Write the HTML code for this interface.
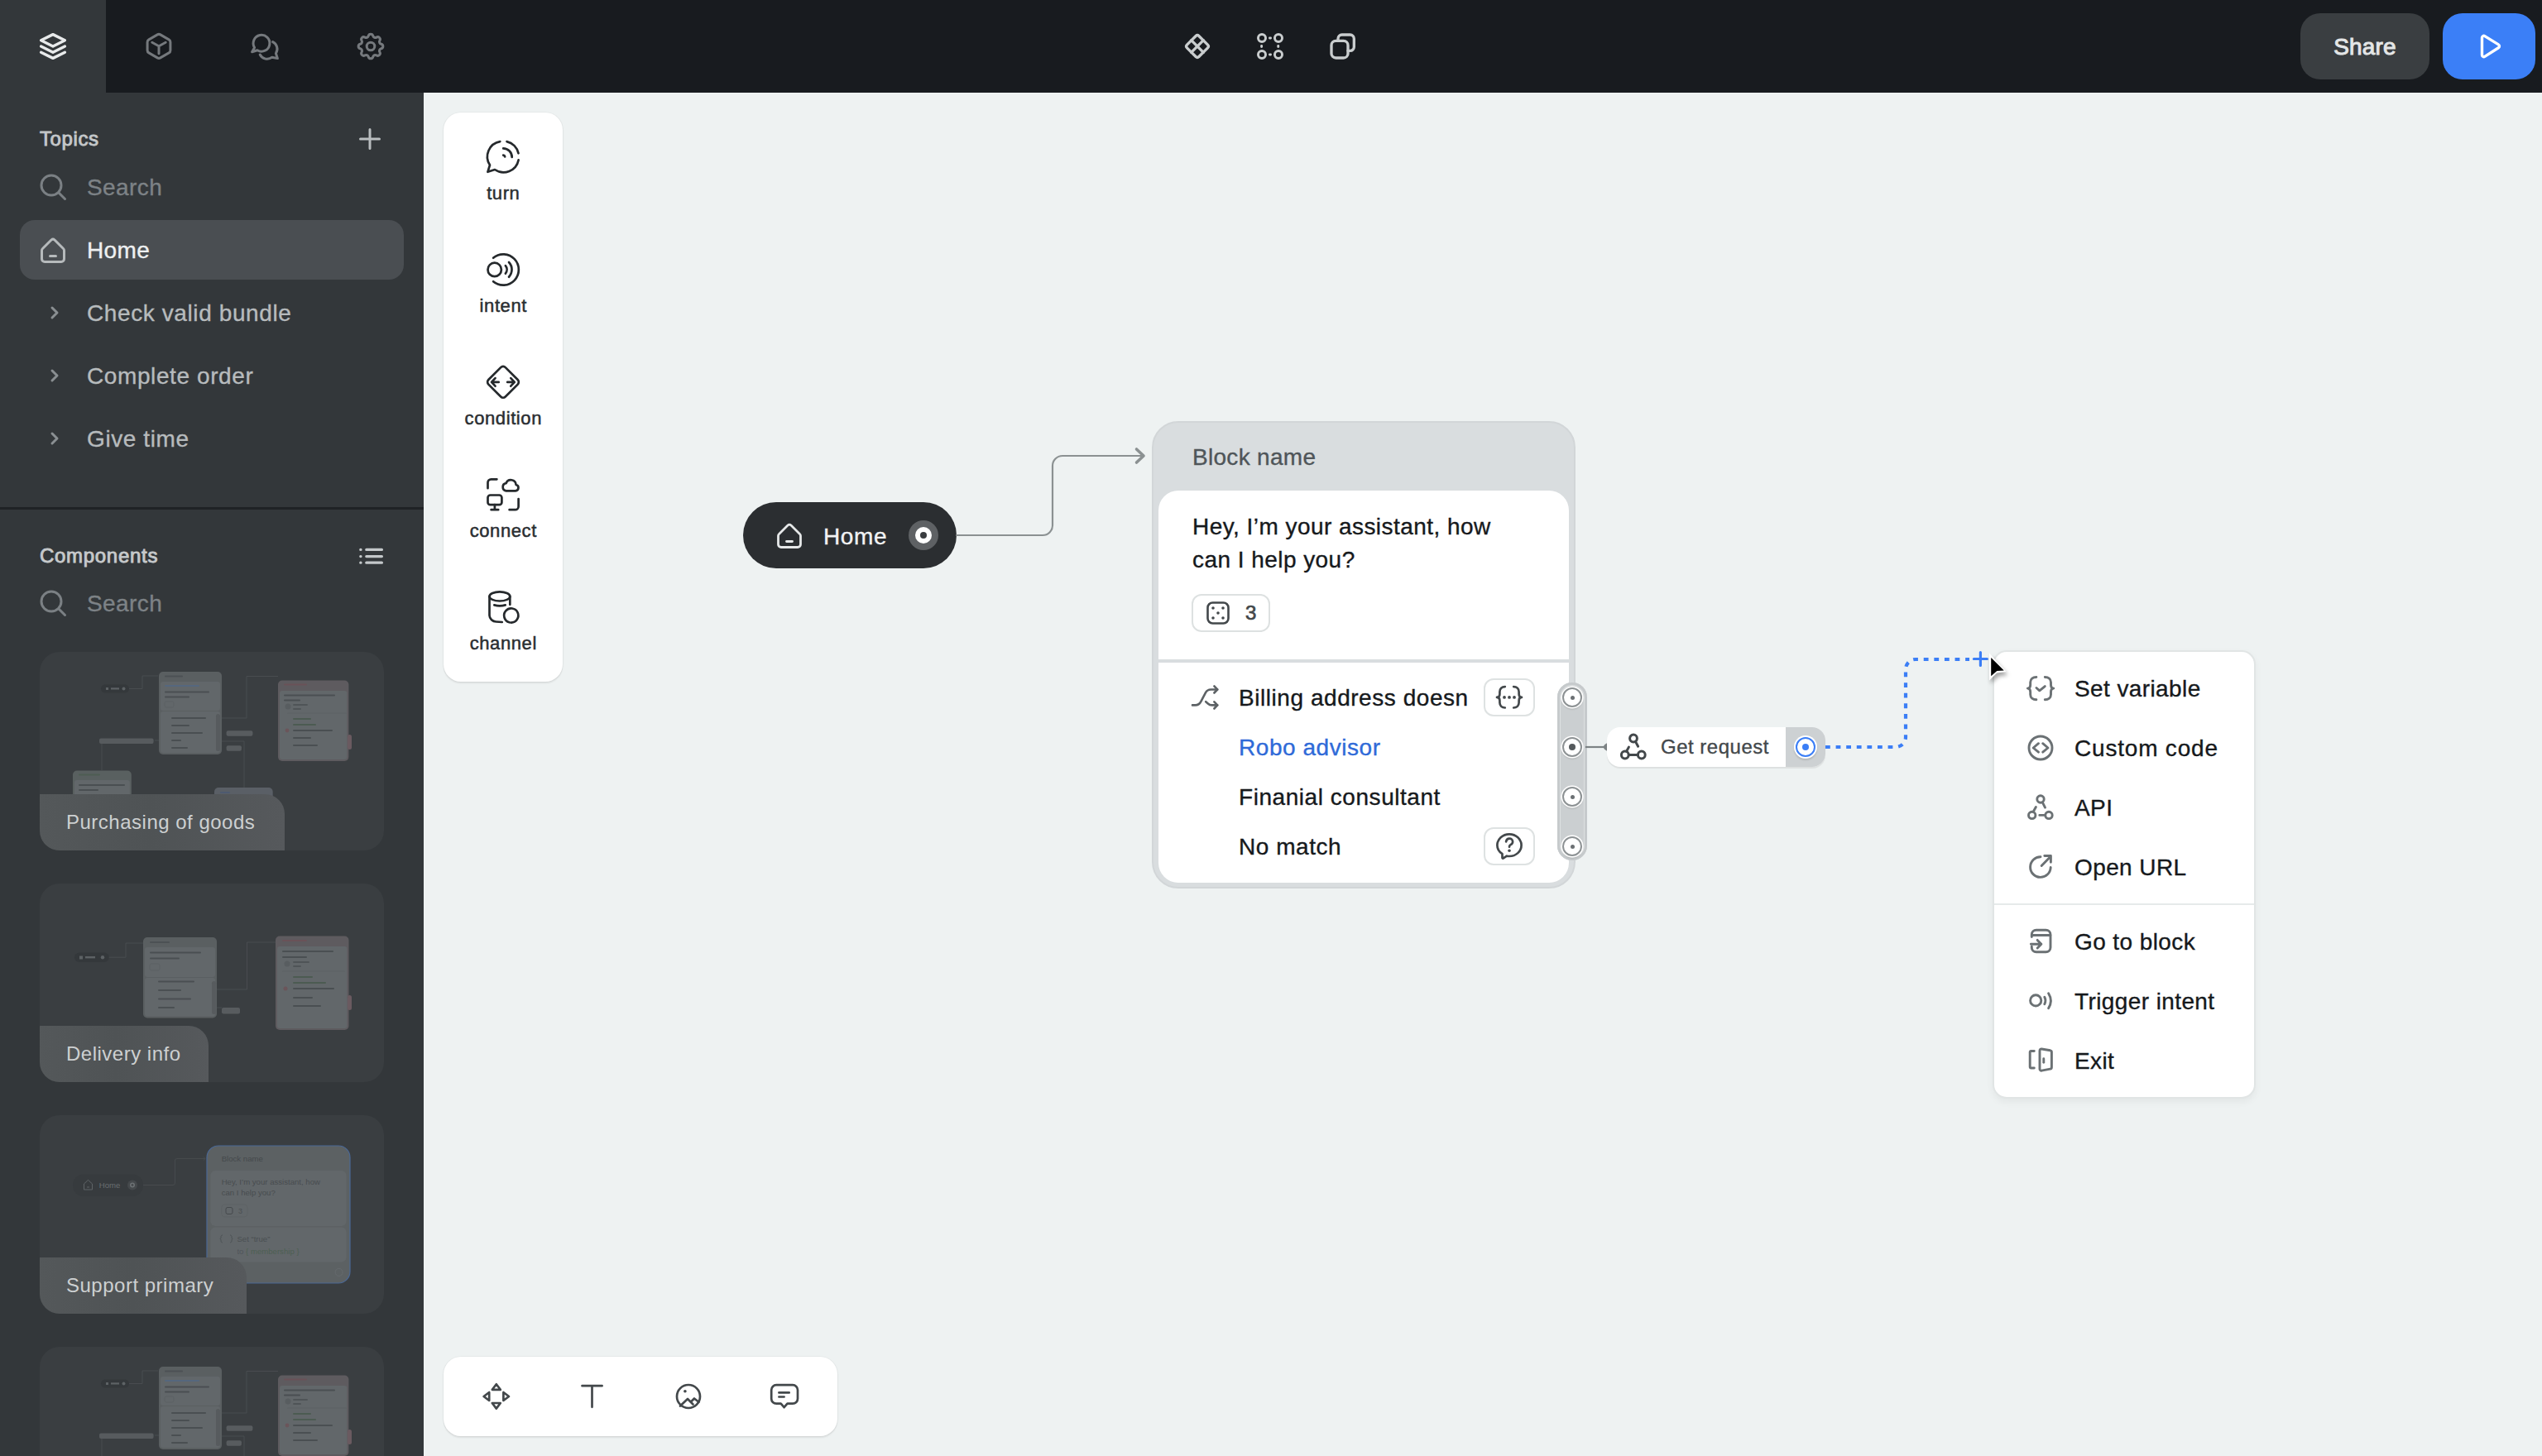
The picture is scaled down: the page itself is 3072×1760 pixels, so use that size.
<!DOCTYPE html>
<html><head><meta charset="utf-8">
<style>
*{margin:0;padding:0;box-sizing:border-box}
html,body{width:3072px;height:1760px;overflow:hidden;background:#eef2f2;font-family:"Liberation Sans",sans-serif}
.a{position:absolute}
svg{display:block;overflow:visible}
.ic{fill:none;stroke-linecap:round;stroke-linejoin:round}
#top{left:0;top:0;width:3072px;height:112px;background:#181b1f}
#side{left:0;top:112px;width:512px;height:1648px;background:#33373a}
.t{white-space:nowrap;line-height:1;-webkit-text-stroke:0.35px currentColor;margin-top:1px}
</style></head>
<body>
<!-- top bar -->
<div id="top" class="a"></div>
<div class="a" style="left:0;top:0;width:128px;height:112px;background:#33373a"></div>
<svg class="a ic" style="left:46px;top:38px" width="36" height="36" viewBox="2 2 20 20" stroke="#e8eaeb" stroke-width="1.9"><path d="M12 4l-8 4l8 4l8-4z"/><path d="M4 12l8 4l8-4"/><path d="M4 16l8 4l8-4"/></svg>
<svg class="a ic" style="left:160px;top:30px" width="320" height="52" viewBox="160 30 320 52" stroke="#75797d" stroke-width="3">
<path d="M190.2 41.9a3.5 3.5 0 0 1 3.6 0l10.3 6a3.5 3.5 0 0 1 1.8 3v10a3.5 3.5 0 0 1-1.8 3l-10.3 6a3.5 3.5 0 0 1-3.6 0l-10.3-6a3.5 3.5 0 0 1-1.8-3v-10a3.5 3.5 0 0 1 1.8-3z"/>
<path d="M183.8 51.3l8.2 4.5l8.2-4.5M192 55.8v9"/>
<path d="M307.6 57.5A9.9 9.9 0 1 1 311 60.8L304.6 62.8z"/>
<path d="M329.6 50.6A9.6 9.6 0 0 1 333.4 64.5L335.4 70.6L328.8 69.2A9.6 9.6 0 0 1 314.2 66"/>
</svg>
<svg class="a ic" style="left:432px;top:40px" width="32" height="32" viewBox="2.3 2.3 19.4 19.4" stroke="#75797d" stroke-width="1.85"><path d="M10.325 4.317c.426 -1.756 2.924 -1.756 3.35 0a1.724 1.724 0 0 0 2.573 1.066c1.543 -.94 3.31 .826 2.37 2.37a1.724 1.724 0 0 0 1.065 2.572c1.756 .426 1.756 2.924 0 3.35a1.724 1.724 0 0 0 -1.066 2.573c.94 1.543 -.826 3.31 -2.37 2.37a1.724 1.724 0 0 0 -2.572 1.065c-.426 1.756 -2.924 1.756 -3.35 0a1.724 1.724 0 0 0 -2.573 -1.066c-1.543 .94 -3.31 -.826 -2.37 -2.37a1.724 1.724 0 0 0 -1.065 -2.572c-1.756 -.426 -1.756 -2.924 0 -3.35a1.724 1.724 0 0 0 1.066 -2.573c-.94 -1.543 .826 -3.31 2.37 -2.37c1 .608 2.296 .07 2.572 -1.065z"/><circle cx="12" cy="12" r="2.9"/></svg>

<svg class="a ic" style="left:1431px;top:40px" width="32" height="32" viewBox="0 0 24 24" stroke="#c9cdce" stroke-width="2.5"><path d="M10.6 2.6a2 2 0 0 1 2.8 0l8 8a2 2 0 0 1 0 2.8l-8 8a2 2 0 0 1-2.8 0l-8-8a2 2 0 0 1 0-2.8z"/><path d="M6.5 6.5l11 11"/><path d="M17.5 6.5l-11 11"/></svg>
<svg class="a ic" style="left:1519px;top:40px" width="32" height="32" viewBox="0 0 24 24" stroke="#c9cdce" stroke-width="2.2"><circle cx="4.5" cy="4.5" r="3.4"/><circle cx="19.5" cy="4.5" r="3.4"/><circle cx="4.5" cy="19.5" r="3.4"/><circle cx="19.5" cy="19.5" r="3.4"/><path d="M11.6 4.5h0.8M11.6 19.5h0.8M4.2 11.6v0.8M19.3 11.6v0.8"/></svg>
<svg class="a ic" style="left:1607px;top:40px" width="32" height="32" viewBox="0 0 24 24" stroke="#c9cdce" stroke-width="2.5"><rect x="1.5" y="7" width="15" height="15.5" rx="4"/><path d="M7.5 7V5a3.5 3.5 0 0 1 3.5-3.5h7.5a3.5 3.5 0 0 1 3.5 3.5v7.5a3.5 3.5 0 0 1-3.5 3.5h-2"/></svg>

<div class="a" style="left:2780px;top:16px;width:156px;height:80px;background:#3a3e41;border-radius:24px"></div>
<div class="a t" style="left:2780px;top:16px;width:156px;height:80px;line-height:80px;text-align:center;font-size:28px;color:#e4e6e7;letter-spacing:0.2px;-webkit-text-stroke:1px #e4e6e7">Share</div>
<div class="a" style="left:2952px;top:16px;width:112px;height:80px;background:#3b7ff7;border-radius:24px"></div>
<svg class="a ic" style="left:2990px;top:38px" width="36" height="36" viewBox="0 0 36 36" stroke="#ffffff" stroke-width="3.4"><path d="M9.5 7.5a2.2 2.2 0 0 1 3.3-1.9l16.6 10.3a2.2 2.2 0 0 1 0 3.8L12.8 30.4a2.2 2.2 0 0 1-3.3-1.9z"/></svg>

<!-- sidebar -->
<div id="side" class="a"></div>
<div class="a t" style="left:48px;top:155px;font-size:24px;color:#c4c7c9;letter-spacing:0.6px;-webkit-text-stroke:0.9px #c4c7c9">Topics</div>
<svg class="a ic" style="left:434px;top:155px" width="26" height="26" viewBox="0 0 26 26" stroke="#b9bdbf" stroke-width="3"><path d="M13 1.5v23M1.5 13h23"/></svg>
<svg class="a ic" style="left:48px;top:210px" width="32" height="32" viewBox="0 0 32 32" stroke="#7b8084" stroke-width="3"><circle cx="14" cy="14" r="12"/><path d="M23 23l7.5 7.5"/></svg>
<div class="a t" style="left:105px;top:212px;font-size:28px;color:#7d8286;letter-spacing:0.4px">Search</div>

<div class="a" style="left:24px;top:266px;width:464px;height:72px;background:#4a4e52;border-radius:18px"></div>
<svg class="a ic" style="left:48px;top:286px" width="32" height="32" viewBox="0 0 32 32" stroke="#b6babc" stroke-width="3"><path d="M3.5 14.5L14 4a3 3 0 0 1 4 0L28.5 14.5a3 3 0 0 1 1 2.2V27a3.5 3.5 0 0 1-3.5 3.5H6A3.5 3.5 0 0 1 2.5 27V16.7a3 3 0 0 1 1-2.2z"/><path d="M12.5 23.5h7"/></svg>
<div class="a t" style="left:105px;top:288px;font-size:28px;color:#eef0f1;letter-spacing:0.4px">Home</div>

<svg class="a ic" style="left:58px;top:370px" width="16" height="16" viewBox="0 0 16 16" stroke="#8a8f92" stroke-width="3"><path d="M5 2l6 6l-6 6"/></svg>
<div class="a t" style="left:105px;top:364px;font-size:28px;color:#b7bbbd;letter-spacing:0.6px">Check valid bundle</div>
<svg class="a ic" style="left:58px;top:446px" width="16" height="16" viewBox="0 0 16 16" stroke="#8a8f92" stroke-width="3"><path d="M5 2l6 6l-6 6"/></svg>
<div class="a t" style="left:105px;top:440px;font-size:28px;color:#b7bbbd;letter-spacing:0.6px">Complete order</div>
<svg class="a ic" style="left:58px;top:522px" width="16" height="16" viewBox="0 0 16 16" stroke="#8a8f92" stroke-width="3"><path d="M5 2l6 6l-6 6"/></svg>
<div class="a t" style="left:105px;top:516px;font-size:28px;color:#b7bbbd;letter-spacing:0.6px">Give time</div>

<div class="a" style="left:0;top:613px;width:512px;height:3px;background:#1f2225"></div>

<div class="a t" style="left:48px;top:659px;font-size:24px;color:#c6c9cb;letter-spacing:0.7px;-webkit-text-stroke:0.9px #c6c9cb">Components</div>
<svg class="a ic" style="left:432px;top:660px" width="32" height="24" viewBox="0 0 32 24" stroke="#c4c8ca" stroke-width="3.3"><path d="M3.8 4.4h0.2M3.8 12.6h0.2M3.8 20.2h0.2M10.8 4.4h18.6M10.8 12.6h18.6M10.8 20.2h18.6"/></svg>
<svg class="a ic" style="left:48px;top:713px" width="32" height="32" viewBox="0 0 32 32" stroke="#7b8084" stroke-width="3"><circle cx="14" cy="14" r="12"/><path d="M23 23l7.5 7.5"/></svg>
<div class="a t" style="left:105px;top:715px;font-size:28px;color:#7d8286;letter-spacing:0.4px">Search</div>

<!-- component cards -->
<div class="a" style="left:48px;top:788px;width:416px;height:240px;background:#3a3e41;border-radius:24px;overflow:hidden"><svg class="a" style="left:0;top:0" width="416" height="240" viewBox="0 0 416 240"><rect x="74" y="39.5" width="34" height="10" rx="5" fill="#34383b"/><rect x="80" y="43" width="3" height="3" fill="#5d6265"/><rect x="86" y="43.3" width="10" height="2.2" fill="#5d6265"/><circle cx="101.5" cy="44.5" r="2" fill="#5d6265"/><path d="M108 44.5H124V29H143" stroke="#4d5154" stroke-width="0.8" fill="none"/><rect x="144" y="24" width="76" height="100" rx="5" fill="#5a5f61"/><rect x="146" y="36" width="72" height="35" rx="3" fill="#62676a"/><rect x="146" y="72" width="72" height="50" rx="3" fill="#62676a"/><rect x="151" y="28.4" width="22" height="2.2" rx="1" fill="#4c5154"/><rect x="151" y="39.9" width="42" height="2.2" rx="1" fill="#55677e"/><rect x="151" y="47.4" width="54" height="2.2" rx="1" fill="#4a4f52"/><rect x="151" y="53.4" width="30" height="2.2" rx="1" fill="#4a4f52"/><rect x="151" y="60" width="11" height="7" rx="2" fill="none" stroke="#575c5f" stroke-width="0.6"/><rect x="159" y="78.9" width="42" height="2.2" rx="1" fill="#4a4f52"/><rect x="159" y="87.9" width="22" height="2.2" rx="1" fill="#4a4f52"/><rect x="159" y="96.9" width="38" height="2.2" rx="1" fill="#4a4f52"/><rect x="159" y="105.9" width="12" height="2.2" rx="1" fill="#4a4f52"/><rect x="159" y="114.9" width="20" height="2.2" rx="1" fill="#4a4f52"/><rect x="213" y="75" width="5" height="45" rx="2.5" fill="#575b5e"/><rect x="288" y="34.6" width="85.4" height="97.4" rx="5" fill="#5e5b5f"/><rect x="290" y="47" width="81.4" height="83" rx="3" fill="#62676a"/><rect x="295" y="38.4" width="28" height="2.2" rx="1" fill="#6a5258"/><rect x="295" y="51.4" width="62" height="2.2" rx="1" fill="#4a4f52"/><rect x="295" y="57.4" width="20" height="2.2" rx="1" fill="#4a4f52"/><circle cx="300" cy="66" r="3.5" fill="#585d60"/><rect x="306" y="63.2" width="18" height="1.6" rx="1" fill="#4a4f52"/><rect x="306" y="68.2" width="10" height="1.6" rx="1" fill="#4a4f52"/><rect x="299" y="73.7" width="72" height="0.6" rx="1" fill="#595e61"/><rect x="306" y="79.9" width="22" height="2.2" rx="1" fill="#4c5b52"/><rect x="306" y="86.9" width="28" height="2.2" rx="1" fill="#4c5b52"/><circle cx="299" cy="95" r="2.4" fill="#6b555a"/><rect x="306" y="93.9" width="48" height="2.2" rx="1" fill="#4a4f52"/><rect x="306" y="102.9" width="22" height="2.2" rx="1" fill="#4a4f52"/><rect x="306" y="111.9" width="30" height="2.2" rx="1" fill="#4a4f52"/><rect x="372" y="100" width="5" height="18" rx="2.5" fill="#6a5a60"/><path d="M220 108H247V164M220 80H250V29.5H288M139 107H144M75 111V143" stroke="#4d5154" stroke-width="0.8" fill="none"/><rect x="72" y="104.6" width="65.6" height="6.4" rx="2" fill="#575b5e"/><rect x="225.6" y="95.3" width="31.8" height="6.5" rx="2" fill="#585c5f"/><rect x="225.6" y="113.3" width="18.3" height="6.5" rx="2" fill="#585c5f"/><rect x="40" y="143.6" width="70.8" height="60" rx="5" fill="#596060"/><rect x="42" y="155" width="66.8" height="40" rx="3" fill="#62676a"/><rect x="47" y="147.4" width="26" height="2.2" rx="1" fill="#4e5d52"/><rect x="47" y="159.9" width="56" height="2.2" rx="1" fill="#4a4f52"/><rect x="47" y="165.9" width="24" height="2.2" rx="1" fill="#4a4f52"/><rect x="211" y="164" width="70.7" height="40" rx="5" fill="#5a5f66"/><rect x="218" y="168.9" width="12" height="2.2" rx="1" fill="#4d5a70"/></svg></div>
<div class="a" style="left:48px;top:960px;width:296px;height:68px;background:linear-gradient(90deg,#54585a,#4f5355 45%,#56595c);border-radius:0 24px 0 24px"></div>
<div class="a t" style="left:80px;top:981px;font-size:24px;color:#cdd0d1;letter-spacing:0.5px;-webkit-text-stroke:0">Purchasing of goods</div>
<div class="a" style="left:48px;top:1068px;width:416px;height:240px;background:#3a3e41;border-radius:24px;overflow:hidden"><svg class="a" style="left:0;top:0" width="416" height="240" viewBox="0 0 416 240"><rect x="42" y="83.5" width="41.7" height="11.5" rx="5.7" fill="#34383b"/><rect x="48" y="87.5" width="4" height="4" fill="#5d6265"/><rect x="55" y="88" width="12" height="2.4" fill="#5d6265"/><circle cx="76" cy="89.2" r="2.2" fill="#5d6265"/><path d="M83.7 89.2H104V72H125M214 128H250.5V71H285M214 150H220" stroke="#4d5154" stroke-width="0.8" fill="none"/><rect x="125" y="65" width="89" height="97.5" rx="5" fill="#5a5f61"/><rect x="127" y="77" width="85" height="36" rx="3" fill="#62676a"/><rect x="127" y="114" width="85" height="46.5" rx="3" fill="#62676a"/><rect x="133" y="69.9" width="24" height="2.2" rx="1" fill="#4c5154"/><rect x="133" y="82.4" width="62" height="2.2" rx="1" fill="#4a4f52"/><rect x="133" y="89.4" width="36" height="2.2" rx="1" fill="#4a4f52"/><rect x="133" y="97" width="12" height="8" rx="2" fill="none" stroke="#575c5f" stroke-width="0.6"/><rect x="143" y="117.4" width="44" height="2.2" rx="1" fill="#4a4f52"/><rect x="143" y="127.9" width="28" height="2.2" rx="1" fill="#4a4f52"/><rect x="143" y="138.4" width="40" height="2.2" rx="1" fill="#4a4f52"/><rect x="143" y="148.9" width="20" height="2.2" rx="1" fill="#4a4f52"/><rect x="208" y="118" width="5" height="40" rx="2.5" fill="#575b5e"/><rect x="285" y="63.5" width="88.5" height="113.5" rx="5" fill="#5e5b5f"/><rect x="287" y="76" width="84.5" height="99" rx="3" fill="#62676a"/><rect x="293" y="67.9" width="30" height="2.2" rx="1" fill="#6a5258"/><rect x="293" y="80.9" width="62" height="2.2" rx="1" fill="#4a4f52"/><rect x="293" y="87.9" width="30" height="2.2" rx="1" fill="#4a4f52"/><circle cx="299" cy="97" r="3.5" fill="#585d60"/><rect x="306" y="94.2" width="20" height="1.6" rx="1" fill="#4a4f52"/><rect x="306" y="99.2" width="10" height="1.6" rx="1" fill="#4a4f52"/><rect x="293" y="105.7" width="76" height="0.6" rx="1" fill="#595e61"/><rect x="306" y="111.9" width="24" height="2.2" rx="1" fill="#4c5b52"/><rect x="306" y="118.9" width="40" height="2.2" rx="1" fill="#4c5b52"/><circle cx="297" cy="127" r="2.5" fill="#6b555a"/><rect x="306" y="125.9" width="50" height="2.2" rx="1" fill="#4a4f52"/><rect x="306" y="136.9" width="24" height="2.2" rx="1" fill="#4a4f52"/><rect x="306" y="146.9" width="34" height="2.2" rx="1" fill="#4a4f52"/><rect x="372" y="135" width="5" height="18" rx="2.5" fill="#6a5a60"/><rect x="220" y="150" width="22" height="7.6" rx="2" fill="#585c5f"/></svg></div>
<div class="a" style="left:48px;top:1240px;width:204px;height:68px;background:linear-gradient(90deg,#54585a,#4f5355 45%,#56595c);border-radius:0 24px 0 24px"></div>
<div class="a t" style="left:80px;top:1261px;font-size:24px;color:#cdd0d1;letter-spacing:0.5px;-webkit-text-stroke:0">Delivery info</div>
<div class="a" style="left:48px;top:1348px;width:416px;height:240px;background:#3a3e41;border-radius:24px;overflow:hidden"><svg class="a" style="left:0;top:0" width="416" height="240" viewBox="0 0 416 240"><rect x="40" y="71.5" width="85" height="26.5" rx="13.2" fill="#373b3e"/><path d="M53.5 83l5-4.6l5 4.6v7h-10z M57 87h3" stroke="#5f6467" stroke-width="1" fill="none"/><text x="71.8" y="88" font-size="9.6" fill="#696e71" font-family="Liberation Sans">Home</text><circle cx="112" cy="84.5" r="6" fill="#45494c"/><circle cx="112" cy="84.5" r="3" fill="#6c7174"/><circle cx="112" cy="84.5" r="1.4" fill="#45494c"/><path d="M125 84.5H161a2.4 2.4 0 0 0 2.4-2.4V55a2.4 2.4 0 0 1 2.4-2.4H200" stroke="#4b4f52" stroke-width="0.8" fill="none"/><path d="M198 50.6l2 2l-2 2" stroke="#4b4f52" stroke-width="0.8" fill="none"/><rect x="202" y="37" width="173" height="166" rx="14" fill="#5c6163" stroke="#4a6896" stroke-width="1.2"/><text x="219.7" y="56" font-size="9.6" fill="#45494c" font-family="Liberation Sans">Block name</text><rect x="206.3" y="67" width="164.3" height="67" rx="6" fill="#62676a"/><rect x="206.3" y="135.5" width="164.3" height="42" rx="6" fill="#62676a"/><text x="219.7" y="84" font-size="9.6" fill="#484c4f" font-family="Liberation Sans">Hey, I’m your assistant, how</text><text x="219.7" y="97" font-size="9.6" fill="#484c4f" font-family="Liberation Sans">can I help you?</text><rect x="219.7" y="108" width="31.3" height="15" rx="4" fill="none" stroke="#5a5f62" stroke-width="0.6"/><rect x="225" y="111.5" width="8" height="8" rx="2" fill="none" stroke="#45494c" stroke-width="1"/><text x="240" y="119" font-size="9" fill="#4a4f52" font-family="Liberation Sans">3</text><path d="M221 145c-1.5 0-2 1-2 2v1c0 1-0.5 1.5-1.2 1.5c0.7 0 1.2 0.5 1.2 1.5v1c0 1 0.5 2 2 2M230 145c1.5 0 2 1 2 2v1c0 1 0.5 1.5 1.2 1.5c-0.7 0-1.2 0.5-1.2 1.5v1c0 1-0.5 2-2 2" stroke="#4b5053" stroke-width="0.9" fill="none"/><text x="238.4" y="152.5" font-size="9.6" fill="#4a4f52" font-family="Liberation Sans">Set “true”</text><text x="238.4" y="167.5" font-size="9.6" fill="#50555a" font-family="Liberation Sans">to <tspan fill="#4d5f52">{ membership }</tspan></text><circle cx="361.6" cy="189.9" r="4.5" fill="none" stroke="#666b6e" stroke-width="1"/></svg></div>
<div class="a" style="left:48px;top:1520px;width:250px;height:68px;background:linear-gradient(90deg,#54585a,#4f5355 45%,#56595c);border-radius:0 24px 0 24px"></div>
<div class="a t" style="left:80px;top:1541px;font-size:24px;color:#cdd0d1;letter-spacing:0.5px;-webkit-text-stroke:0">Support primary</div>
<div class="a" style="left:48px;top:1628px;width:416px;height:240px;background:#3a3e41;border-radius:24px;overflow:hidden"><svg class="a" style="left:0;top:0" width="416" height="240" viewBox="0 0 416 240"><rect x="74" y="39.5" width="34" height="10" rx="5" fill="#34383b"/><rect x="80" y="43" width="3" height="3" fill="#5d6265"/><rect x="86" y="43.3" width="10" height="2.2" fill="#5d6265"/><circle cx="101.5" cy="44.5" r="2" fill="#5d6265"/><path d="M108 44.5H124V29H143" stroke="#4d5154" stroke-width="0.8" fill="none"/><rect x="144" y="24" width="76" height="100" rx="5" fill="#5a5f61"/><rect x="146" y="36" width="72" height="35" rx="3" fill="#62676a"/><rect x="146" y="72" width="72" height="50" rx="3" fill="#62676a"/><rect x="151" y="28.4" width="22" height="2.2" rx="1" fill="#4c5154"/><rect x="151" y="39.9" width="42" height="2.2" rx="1" fill="#55677e"/><rect x="151" y="47.4" width="54" height="2.2" rx="1" fill="#4a4f52"/><rect x="151" y="53.4" width="30" height="2.2" rx="1" fill="#4a4f52"/><rect x="151" y="60" width="11" height="7" rx="2" fill="none" stroke="#575c5f" stroke-width="0.6"/><rect x="159" y="78.9" width="42" height="2.2" rx="1" fill="#4a4f52"/><rect x="159" y="87.9" width="22" height="2.2" rx="1" fill="#4a4f52"/><rect x="159" y="96.9" width="38" height="2.2" rx="1" fill="#4a4f52"/><rect x="159" y="105.9" width="12" height="2.2" rx="1" fill="#4a4f52"/><rect x="159" y="114.9" width="20" height="2.2" rx="1" fill="#4a4f52"/><rect x="213" y="75" width="5" height="45" rx="2.5" fill="#575b5e"/><rect x="288" y="34.6" width="85.4" height="97.4" rx="5" fill="#5e5b5f"/><rect x="290" y="47" width="81.4" height="83" rx="3" fill="#62676a"/><rect x="295" y="38.4" width="28" height="2.2" rx="1" fill="#6a5258"/><rect x="295" y="51.4" width="62" height="2.2" rx="1" fill="#4a4f52"/><rect x="295" y="57.4" width="20" height="2.2" rx="1" fill="#4a4f52"/><circle cx="300" cy="66" r="3.5" fill="#585d60"/><rect x="306" y="63.2" width="18" height="1.6" rx="1" fill="#4a4f52"/><rect x="306" y="68.2" width="10" height="1.6" rx="1" fill="#4a4f52"/><rect x="299" y="73.7" width="72" height="0.6" rx="1" fill="#595e61"/><rect x="306" y="79.9" width="22" height="2.2" rx="1" fill="#4c5b52"/><rect x="306" y="86.9" width="28" height="2.2" rx="1" fill="#4c5b52"/><circle cx="299" cy="95" r="2.4" fill="#6b555a"/><rect x="306" y="93.9" width="48" height="2.2" rx="1" fill="#4a4f52"/><rect x="306" y="102.9" width="22" height="2.2" rx="1" fill="#4a4f52"/><rect x="306" y="111.9" width="30" height="2.2" rx="1" fill="#4a4f52"/><rect x="372" y="100" width="5" height="18" rx="2.5" fill="#6a5a60"/><path d="M220 108H247V164M220 80H250V29.5H288M139 107H144M75 111V143" stroke="#4d5154" stroke-width="0.8" fill="none"/><rect x="72" y="104.6" width="65.6" height="6.4" rx="2" fill="#575b5e"/><rect x="225.6" y="95.3" width="31.8" height="6.5" rx="2" fill="#585c5f"/><rect x="225.6" y="113.3" width="18.3" height="6.5" rx="2" fill="#585c5f"/><rect x="40" y="143.6" width="70.8" height="60" rx="5" fill="#596060"/><rect x="42" y="155" width="66.8" height="40" rx="3" fill="#62676a"/><rect x="47" y="147.4" width="26" height="2.2" rx="1" fill="#4e5d52"/><rect x="47" y="159.9" width="56" height="2.2" rx="1" fill="#4a4f52"/><rect x="47" y="165.9" width="24" height="2.2" rx="1" fill="#4a4f52"/><rect x="211" y="164" width="70.7" height="40" rx="5" fill="#5a5f66"/><rect x="218" y="168.9" width="12" height="2.2" rx="1" fill="#4d5a70"/></svg></div>
<!-- end cards -->

<!-- canvas -->
<div class="a" style="left:512px;top:112px;width:2560px;height:1648px;background:#eef2f2"></div>

<!-- tool panel -->
<div class="a" style="left:536px;top:136px;width:144px;height:688px;background:#ffffff;border-radius:21px;box-shadow:0 0 0 1px rgba(0,0,0,0.03),0 1.5px 2px rgba(0,0,0,0.08)"></div>
<svg class="a ic" style="left:580px;top:160px" width="60" height="60" viewBox="0 0 60 60" stroke="#25292c" stroke-width="2.7"><path d="M24.3 11.1A18.5 18.5 0 0 0 12 39.5L9.4 47.8L18 45A18.5 18.5 0 0 0 46.6 33.4"/><path d="M32.5 11.1A18.5 18.5 0 0 1 46.5 25.3"/><path d="M28.2 19.4A10.5 10.5 0 0 1 38.7 30"/><path d="M28.2 27.6A2.2 2.2 0 0 1 30.2 29.4"/></svg>
<div class="a t" style="left:536px;top:222px;width:144px;text-align:center;font-size:22px;letter-spacing:0.6px;text-indent:0.6px;color:#2a2e31;-webkit-text-stroke:0.5px #2a2e31">turn</div>
<svg class="a ic" style="left:580px;top:296px" width="60" height="60" viewBox="0 0 60 60" stroke="#25292c" stroke-width="2.7"><path d="M16.1 15.7A18.7 18.7 0 1 1 16.1 44.3"/><circle cx="17.7" cy="29.9" r="8.2"/><path d="M30.9 25.1A7.5 7.5 0 0 1 30.9 34.6"/><path d="M35 21A12.9 12.9 0 0 1 35 38.7"/></svg>
<div class="a t" style="left:536px;top:358px;width:144px;text-align:center;font-size:22px;letter-spacing:0.6px;text-indent:0.6px;color:#2a2e31;-webkit-text-stroke:0.5px #2a2e31">intent</div>
<svg class="a ic" style="left:580px;top:432px" width="60" height="60" viewBox="0 0 60 60" stroke="#25292c" stroke-width="2.7"><path d="M25.2 12.1a4 4 0 0 1 5.6 0l14.9 14.9a4 4 0 0 1 0 5.6L30.8 47.5a4 4 0 0 1-5.6 0L10.3 32.6a4 4 0 0 1 0-5.6z"/><path d="M18.5 25.1L14 29.9L18.5 34.7M14.5 29.9h8.2M37.3 25.1L41.8 29.9L37.3 34.7M41.3 29.9h-8.1"/></svg>
<div class="a t" style="left:536px;top:494px;width:144px;text-align:center;font-size:22px;letter-spacing:0.6px;text-indent:0.6px;color:#2a2e31;-webkit-text-stroke:0.5px #2a2e31">condition</div>
<svg class="a ic" style="left:580px;top:568px" width="60" height="60" viewBox="0 0 60 60" stroke="#25292c" stroke-width="2.7"><path d="M9.5 22.2V15.3a4 4 0 0 1 4-4H20.4"/><path d="M31.6 25.3H43a3.7 3.7 0 0 0 0.6-7.3A6.2 6.2 0 0 0 31.6 16.2A4.6 4.6 0 0 0 31.6 25.3z"/><rect x="9.5" y="30.5" width="16.9" height="11.7" rx="3"/><path d="M17.9 42.2v6M13.6 48.2h8.6"/><path d="M46.6 35v9.2a4 4 0 0 1-4 4H35.6"/></svg>
<div class="a t" style="left:536px;top:630px;width:144px;text-align:center;font-size:22px;letter-spacing:0.6px;text-indent:0.6px;color:#2a2e31;-webkit-text-stroke:0.5px #2a2e31">connect</div>
<svg class="a ic" style="left:580px;top:704px" width="60" height="60" viewBox="0 0 60 60" stroke="#25292c" stroke-width="2.7"><ellipse cx="23.9" cy="16.9" rx="12.4" ry="5.6"/><path d="M11.5 16.9V40a8 8 0 0 0 8 7.5l7.3 0.5"/><path d="M36.3 16.9v9.9"/><path d="M17.3 27.4q6.7 2 13.4 0"/><path d="M35.5 48.3A8.6 8.6 0 1 1 37.5 48.6"/></svg>
<div class="a t" style="left:536px;top:766px;width:144px;text-align:center;font-size:22px;letter-spacing:0.6px;text-indent:0.6px;color:#2a2e31;-webkit-text-stroke:0.5px #2a2e31">channel</div>

<!-- block -->
<div class="a" style="left:1392px;top:509px;width:512px;height:565px;background:#d9dddf;border:2px solid #d2d6d8;border-radius:32px"></div>
<div class="a t" style="left:1441px;top:538px;font-size:28px;color:#4f5559;letter-spacing:0.3px">Block name</div>
<div class="a" style="left:1400px;top:593px;width:496px;height:204px;background:#ffffff;border-radius:24px 24px 0 0"></div>
<div class="a t" style="left:1441px;top:616px;font-size:28px;line-height:40px;color:#16191c;letter-spacing:0.45px">Hey, I’m your assistant, how<br>can I help you?</div>
<div class="a" style="left:1440px;top:718px;width:95px;height:46px;border:2px solid #dde1e1;border-radius:12px"></div>
<svg class="a ic" style="left:1458px;top:727px" width="28" height="28" viewBox="0 0 28 28" stroke="#43484b" stroke-width="2.6"><rect x="1.5" y="1.5" width="25" height="25" rx="6"/><path d="M8 8h.01M20 8h.01M14 14h.01M8 20h.01M20 20h.01" stroke-width="3.6"/></svg>
<div class="a t" style="left:1505px;top:728px;font-size:24px;color:#43484b;-webkit-text-stroke:0.7px #43484b">3</div>

<div class="a" style="left:1400px;top:801px;width:496px;height:266px;background:#ffffff;border-radius:0 0 24px 24px"></div>
<svg class="a ic" style="left:1430px;top:815px" width="70" height="55" viewBox="0 0 70 55" stroke="#5d6265" stroke-width="2.6"><path d="M11 37.4h3.4c3.5 0 5.5-1.5 7-4.5l5.5-10.5c1.5-2.8 3.5-3.9 6.5-3.9h7.8"/><path d="M37.4 14.4l3.8 4.1l-3.8 4"/><path d="M27.2 33.2l2.3 2c1 0.9 2 2.2 5 2.2h6.7"/><path d="M37.4 33.3l3.8 4.1l-3.8 4.1"/></svg>
<div class="a t" style="left:1497px;top:829px;font-size:28px;color:#16191c;letter-spacing:0.55px">Billing address doesn</div>
<div class="a t" style="left:1497px;top:889px;font-size:28px;color:#2f6ad8;letter-spacing:0.55px">Robo advisor</div>
<div class="a t" style="left:1497px;top:949px;font-size:28px;color:#16191c;letter-spacing:0.55px">Finanial consultant</div>
<div class="a t" style="left:1497px;top:1009px;font-size:28px;color:#16191c;letter-spacing:0.55px">No match</div>
<div class="a" style="left:1793px;top:820px;width:62px;height:46px;border:2px solid #dee2e2;border-radius:12px"></div>
<svg class="a ic" style="left:1785px;top:812px" width="80" height="60" viewBox="0 0 80 60" stroke="#43484b" stroke-width="2.7"><path d="M33.8 18.1c-3.8 0-6.4 2.4-6.4 6.2v2.6c0 2.4-1.2 4-3.4 4c2.2 0 3.4 1.6 3.4 4v2.4c0 3.8 2.6 6.2 6.4 6.2"/><path d="M44.2 18.1c3.8 0 6.4 2.4 6.4 6.2v2.6c0 2.4 1.2 4 3.4 4c-2.2 0-3.4 1.6-3.4 4v2.4c0 3.8-2.6 6.2-6.4 6.2"/><path d="M33 30.9h.01M39 30.9h.01M45 30.9h.01" stroke-width="3.8"/></svg>
<div class="a" style="left:1793px;top:1000px;width:62px;height:46px;border:2px solid #dee2e2;border-radius:12px"></div>
<svg class="a ic" style="left:1785px;top:992px" width="80" height="60" viewBox="0 0 80 60" stroke="#43484b" stroke-width="2.7"><path d="M30.5 40.2C26.6 37.6 24.4 34 24.4 29.7C24.4 22.3 30.9 16.4 39 16.4S53.6 22.3 53.6 29.7S47.1 43 39 43c-1 0-2-.1-3-.3l-4.1 2.7c-.6.4-1.4 0-1.4-.7z"/><path d="M35.1 25.4c.3-2.3 2-3.8 4-3.8c2.3 0 4 1.7 4 3.8c0 2-1.2 3-2.6 3.8c-1.1.6-1.5 1.5-1.5 2.5"/><path d="M39 36.3h.01" stroke-width="3.5"/></svg>

<!-- port track -->
<div class="a" style="left:1882px;top:825px;width:36px;height:215px;background:#cbcfd1;border-radius:18px;box-shadow:inset 0 0 0 3px #c6cacc, inset 0 0 0 4px #dde0e1"></div>
<div class="a" style="left:1888px;top:831px;width:24px;height:24px;border-radius:50%;background:#fff;box-shadow:0 0 0 1.6px #fff, 0 2.5px 2px rgba(0,0,0,0.14);border:2px solid #8d9294"></div>
<div class="a" style="left:1897.5px;top:840.5px;width:5px;height:5px;border-radius:50%;background:#6b7073"></div>
<div class="a" style="left:1888px;top:891px;width:24px;height:24px;border-radius:50%;background:#fff;box-shadow:0 0 0 1.6px #fff, 0 2.5px 2px rgba(0,0,0,0.14);border:2px solid #8d9294"></div>
<div class="a" style="left:1896px;top:899px;width:8px;height:8px;border-radius:50%;background:#54595c"></div>
<div class="a" style="left:1888px;top:951px;width:24px;height:24px;border-radius:50%;background:#fff;box-shadow:0 0 0 1.6px #fff, 0 2.5px 2px rgba(0,0,0,0.14);border:2px solid #8d9294"></div>
<div class="a" style="left:1897.5px;top:960.5px;width:5px;height:5px;border-radius:50%;background:#6b7073"></div>
<div class="a" style="left:1888px;top:1011px;width:24px;height:24px;border-radius:50%;background:#fff;box-shadow:0 0 0 1.6px #fff, 0 2.5px 2px rgba(0,0,0,0.14);border:2px solid #8d9294"></div>
<div class="a" style="left:1897.5px;top:1020.5px;width:5px;height:5px;border-radius:50%;background:#6b7073"></div>

<!-- get request -->
<svg class="a" style="left:1910px;top:890px" width="40" height="26" viewBox="1910 890 40 26"><path d="M1916 903H1940" stroke="#7d8385" stroke-width="2.2"/><path d="M1944 897v12l-4-2.5a4 4 0 0 1 0-7z" fill="#7d8385"/></svg>
<div class="a" style="left:1942px;top:879px;width:264px;height:48px;background:#ffffff;border-radius:16px;box-shadow:0 2px 1px rgba(0,0,0,0.07);overflow:hidden"><div class="a" style="left:216px;top:0;width:48px;height:48px;background:#cdd1d3"></div></div>
<svg class="a ic" style="left:1956px;top:885px" width="36" height="36" viewBox="0 0 36 36" stroke="#43484b" stroke-width="3"><circle cx="18" cy="7.5" r="4.4"/><circle cx="7.8" cy="27.5" r="4.4"/><circle cx="27.8" cy="27.5" r="4.4"/><path d="M20.6 11.6l3 5.6M9.6 23.3l2.8-5.2M12.4 27.5h10.8"/></svg>
<div class="a t" style="left:2007px;top:890px;font-size:24px;color:#43484b;letter-spacing:0.5px">Get request</div>
<div class="a" style="left:2168px;top:889px;width:28px;height:28px;border-radius:50%;background:#fff;box-shadow:0 2px 2px rgba(0,0,0,0.12)"></div>
<div class="a" style="left:2170px;top:891px;width:24px;height:24px;border-radius:50%;border:2.6px solid #3b7ef6"></div>
<div class="a" style="left:2178px;top:899px;width:8px;height:8px;border-radius:50%;background:#3b7ef6"></div>

<!-- dashed connector -->
<svg class="a" style="left:2200px;top:780px" width="220" height="140" viewBox="2200 780 220 140" fill="none"><path d="M2206 903H2291a12 12 0 0 0 12-12V809a12 12 0 0 1 12-12H2380" stroke="#3b7ef6" stroke-width="4.2" stroke-dasharray="5.8 6.8"/><path d="M2393.4 788.5v16M2385.4 796.5h16" stroke="#3b7ef6" stroke-width="3.2" stroke-linecap="round"/></svg>

<!-- menu -->
<div class="a" style="left:2408px;top:786px;width:318px;height:542px;background:#ffffff;border-radius:17px;border:2px solid #e1e5e5;box-shadow:0 4px 10px rgba(0,0,0,0.05)"></div>
<div class="a" style="left:2410px;top:1092px;width:314px;height:2px;background:#e6eaea"></div>
<div class="a t" style="left:2507px;top:818px;font-size:28px;color:#16191c;letter-spacing:0.4px">Set variable</div>
<div class="a t" style="left:2507px;top:890px;font-size:28px;color:#16191c;letter-spacing:0.8px">Custom code</div>
<div class="a t" style="left:2507px;top:962px;font-size:28px;color:#16191c;letter-spacing:0.4px">API</div>
<div class="a t" style="left:2507px;top:1034px;font-size:28px;color:#16191c;letter-spacing:0.4px">Open URL</div>
<div class="a t" style="left:2507px;top:1124px;font-size:28px;color:#16191c;letter-spacing:0.4px">Go to block</div>
<div class="a t" style="left:2507px;top:1196px;font-size:28px;color:#16191c;letter-spacing:0.4px">Trigger intent</div>
<div class="a t" style="left:2507px;top:1268px;font-size:28px;color:#16191c;letter-spacing:0.4px">Exit</div>


<svg class="a ic" style="left:2440px;top:810px" width="60" height="480" viewBox="2440 810 60 480" stroke="#6b7174" stroke-width="2.9">
<path d="M2460.9 818.5c-4.2 0-7.2 2.4-7.2 6.2v3.2c0 2.4-1.2 4.2-3.3 4.2c2.1 0 3.3 1.8 3.3 4.2v3.2c0 3.8 3 6.2 7.2 6.2"/>
<path d="M2471.3 818.5c4.2 0 7.2 2.4 7.2 6.2v3.2c0 2.4 1.2 4.2 3.3 4.2c-2.1 0-3.3 1.8-3.3 4.2v3.2c0 3.8-3 6.2-7.2 6.2"/>
<path d="M2461 831.5l3.8 3.3l6.5-5.2"/>
<circle cx="2466" cy="904" r="14"/>
<path d="M2463.5 898.7l-6.3 5.3l6.3 5.2M2468.7 898.7l6.3 5.3l-6.3 5.2"/>
<circle cx="2466" cy="966" r="4.2"/><circle cx="2455.7" cy="985.4" r="4.2"/><circle cx="2476" cy="985.4" r="4.2"/>
<path d="M2468.7 970.6l2.8 5.5M2457.6 980.5l2.8-5M2464.8 985.4h6.8"/>
<path d="M2466 1035.8A12.3 12.3 0 1 0 2478.2 1048.5"/>
<path d="M2467.2 1046.5l11-11.2M2470.8 1034.5h7.6v7.8"/>
<path d="M2455.3 1132.5v-2.8a5.5 5.5 0 0 1 5.5-5.5h11.7a5.5 5.5 0 0 1 5.5 5.5v15.6a5.5 5.5 0 0 1-5.5 5.5h-11.7a5.5 5.5 0 0 1-5.5-5.5v-1"/>
<path d="M2455.5 1130.5h22.2"/>
<path d="M2454.4 1141.2h12.5M2462.2 1136.4l4.7 4.8l-4.7 4.8"/>
<circle cx="2460.2" cy="1209.4" r="6.6"/>
<path d="M2470.8 1205.3a9 9 0 0 1 0 8.5M2475.6 1200.8a17 17 0 0 1 0 18"/>
<g transform="translate(0,20)"><path d="M2458.3 1271h-3.6a1.5 1.5 0 0 1-1.5-1.5v-17.5a1.5 1.5 0 0 1 1.5-1.5h3.6"/>
<path d="M2465 1250a2 2 0 0 1 2.3-2l10.5 1.8a2 2 0 0 1 1.6 2v18.4a2 2 0 0 1-1.6 2l-10.5 2a2 2 0 0 1-2.3-2z"/>
<path d="M2469.8 1259.8v4.4"/></g>
</svg>

<!-- cursor -->
<svg class="a" style="left:2395px;top:785px;filter:drop-shadow(2px 4px 2.5px rgba(0,0,0,0.35))" width="40" height="45" viewBox="2395 785 40 45"><path d="M2404 789.5V822.5L2413.2 813.4L2424.5 812z" fill="#ffffff"/><path d="M2406.2 795V817.3L2413.3 811L2421.8 810.6z" fill="#000000"/></svg>

<!-- bottom toolbar -->
<div class="a" style="left:536px;top:1640px;width:476px;height:96px;background:#ffffff;border-radius:21px;box-shadow:0 0 0 1px rgba(0,0,0,0.03),0 1.5px 2px rgba(0,0,0,0.08)"></div>


<svg class="a ic" style="left:580px;top:1665px" width="280" height="46" viewBox="580 1665 280 46" stroke="#43484b" stroke-width="2.7">
<path d="M599.8 1673.2l5 6.6h-10z"/><path d="M599.8 1702.6l5-6.6h-10z"/><path d="M584.6 1688l6.6-5v10z"/><path d="M615 1688l-6.6-5v10z"/>
<path d="M703.5 1675.2h24.1M715.5 1675.2v25.6"/>
<circle cx="832" cy="1688" r="14"/><path d="M827.9 1681.8h.01" stroke-width="3.6"/><path d="M822 1699.5l9-8.5l6.5 6.5M835 1694.5l4-4l5.5 4.2"/>
<path d="M938.2 1674.2h19.8a6 6 0 0 1 6 6v10.5a6 6 0 0 1-6 6h-6.5l-3.9 4.5l-3.9-4.5h-5.5a6 6 0 0 1-6-6v-10.5a6 6 0 0 1 6-6z"/><path d="M941.4 1683.4h12.3M941.4 1688.5h6.2"/>
</svg>

<!-- home node -->
<div class="a" style="left:898px;top:607px;width:258px;height:80px;background:#2b2e31;border-radius:40px"></div>
<svg class="a ic" style="left:938px;top:631px" width="32" height="32" viewBox="0 0 32 32" stroke="#e6e8e9" stroke-width="2.8"><path d="M3.5 14.5L14 4a3 3 0 0 1 4 0L28.5 14.5a3 3 0 0 1 1 2.2V27a3.5 3.5 0 0 1-3.5 3.5H6A3.5 3.5 0 0 1 2.5 27V16.7a3 3 0 0 1 1-2.2z"/><path d="M12.5 23.5h7"/></svg>
<div class="a t" style="left:995px;top:634px;font-size:28px;color:#f2f3f4;letter-spacing:0.6px">Home</div>
<div class="a" style="left:1098px;top:629px;width:36px;height:36px;border-radius:50%;background:#5e6164"></div>
<div class="a" style="left:1106px;top:637px;width:20px;height:20px;border-radius:50%;background:#ffffff"></div>
<div class="a" style="left:1112px;top:643px;width:8px;height:8px;border-radius:50%;background:#3a3d40"></div>
<svg class="a ic" style="left:1150px;top:530px" width="250" height="130" viewBox="1150 530 250 130" stroke="#8b9192" stroke-width="2.2"><path d="M1156 647H1260a12 12 0 0 0 12-12V563a12 12 0 0 1 12-12H1382"/><path d="M1373.5 543l8.5 8l-8.5 8" stroke-width="3.6"/></svg>

</body></html>
